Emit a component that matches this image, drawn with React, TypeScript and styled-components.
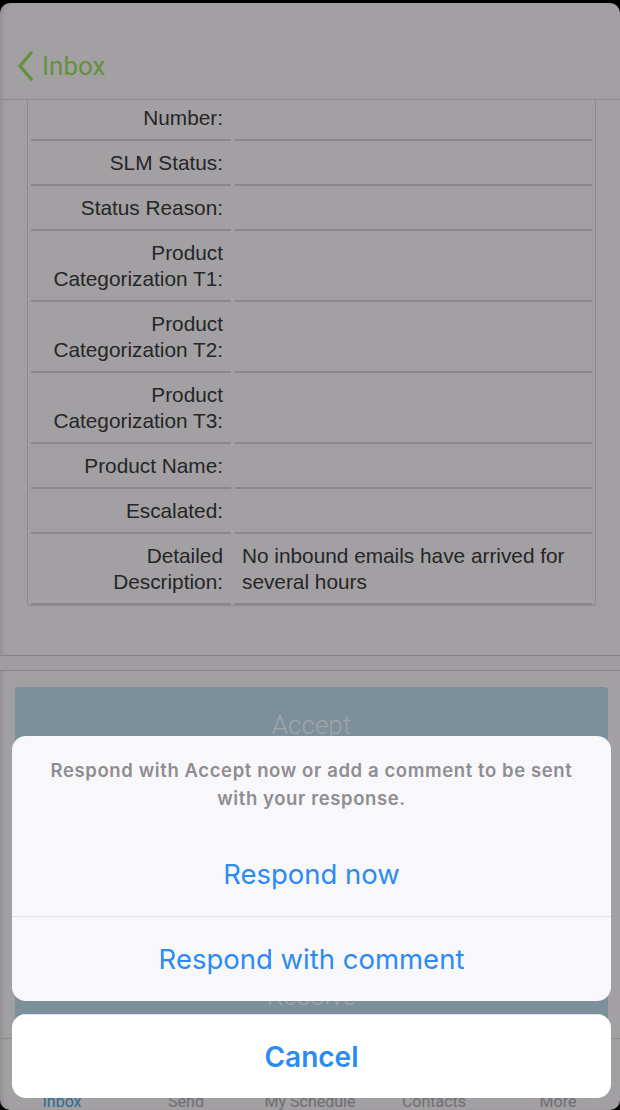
import React from 'react';
import styled, { createGlobalStyle } from 'styled-components';

const GlobalStyle = createGlobalStyle`
  html, body {
    margin: 0;
    padding: 0;
    background: #000;
  }
  * {
    box-sizing: border-box;
  }
`;

const Screen = styled.div`
  position: relative;
  width: 620px;
  height: 1110px;
  padding-top: 3px;
  background: #000;
  overflow: hidden;
`;

const Card = styled.div`
  display: flex;
  flex-direction: column;
  height: 1107px;
  background: #a2a0a3;
  border-radius: 10px;
  overflow: hidden;
  box-shadow: inset 5px 0 5px -3px rgba(0, 0, 0, 0.12);
`;

const NavBar = styled.div`
  display: flex;
  align-items: flex-end;
  height: 97px;
  padding: 0 0 18px 17px;
  border-bottom: 1px solid #8c8a8d;
  flex-shrink: 0;
`;

const BackButton = styled.div`
  display: flex;
  align-items: center;
  gap: 9px;
  color: #64913c;
  font-family: Roboto, 'Liberation Sans', sans-serif;
  font-size: 26px;
  line-height: 30px;
`;

const ScrollArea = styled.div`
  height: 555px;
  overflow: hidden;
  flex-shrink: 0;
`;

const DetailTable = styled.div`
  margin: -4px 0 0 27px;
  width: 569px;
  padding: 0 3px;
  border: 1px solid #8d8b8e;
  border-top: none;
  border-radius: 0 0 4px 4px;
`;

const Row = styled.div`
  display: grid;
  grid-template-columns: 200px 1fr;
  column-gap: 4px;
`;

const Cell = styled.div<{ $label?: boolean }>`
  padding: 8.5px ${({ $label }) => ($label ? '8px 8.5px 0' : '0 8.5px 7px')};
  border-bottom: 2px solid #8a888b;
  text-align: ${({ $label }) => ($label ? 'right' : 'left')};
  font-family: 'Liberation Sans', Arial, sans-serif;
  font-size: 20.8px;
  line-height: 26px;
  color: #262527;
`;

const Strip = styled.div`
  height: 16px;
  border-top: 1px solid #858386;
  border-bottom: 1px solid #8a888b;
  background: #9f9da0;
  flex-shrink: 0;
`;

const ActionPanel = styled.div`
  display: flex;
  flex-direction: column;
  justify-content: space-between;
  flex: 1;
  padding: 16px 12px 4px 15px;
`;

const PanelButton = styled.div`
  display: flex;
  align-items: center;
  justify-content: center;
  height: 76px;
  background: #7b909b;
  border-radius: 4px;
  color: #a1a4a7;
  font-family: Roboto, 'Liberation Sans', sans-serif;
  font-weight: 300;
  font-size: 26px;
`;

const TabBar = styled.div`
  display: grid;
  grid-template-columns: repeat(5, 1fr);
  height: 72px;
  padding-top: 53px;
  border-top: 1px solid #8c8a8d;
  flex-shrink: 0;
`;

const TabLabel = styled.div<{ $active?: boolean }>`
  text-align: center;
  font-family: Roboto, 'Liberation Sans', sans-serif;
  font-size: 16px;
  line-height: 20px;
  color: ${({ $active }) => ($active ? '#2a6d8c' : '#6f6d70')};
`;

const Sheet = styled.div`
  position: absolute;
  left: 12px;
  right: 9px;
  bottom: 12px;
  display: flex;
  flex-direction: column;
  gap: 13px;
`;

const SheetGroup = styled.div`
  background: #f8f7fa;
  border-radius: 14px;
  overflow: hidden;
`;

const SheetMessage = styled.div`
  padding: 20px 26px 19px;
  text-align: center;
  font-family: Inter, 'Liberation Sans', sans-serif;
  font-weight: 600;
  font-size: 18.5px;
  letter-spacing: 0.6px;
  line-height: 28px;
  color: #8e8d92;
`;

const SheetAction = styled.div<{ $bold?: boolean }>`
  display: flex;
  align-items: center;
  justify-content: center;
  height: ${({ $bold }) => ($bold ? 84 : 85)}px;
  border-top: 1px solid #e1e0e4;
  background: ${({ $bold }) => ($bold ? '#ffffff' : 'transparent')};
  font-family: Inter, 'Liberation Sans', sans-serif;
  font-weight: ${({ $bold }) => ($bold ? 600 : 400)};
  font-size: ${({ $bold }) => ($bold ? 28 : 27.5)}px;
  color: #2c8bf3;
`;

const FirstAction = styled(SheetAction)`
  border-top-color: transparent;
`;

type Field = { label: string[]; value?: string[] };

const fields: Field[] = [
  { label: ['Number:'] },
  { label: ['SLM Status:'] },
  { label: ['Status Reason:'] },
  { label: ['Product', 'Categorization T1:'] },
  { label: ['Product', 'Categorization T2:'] },
  { label: ['Product', 'Categorization T3:'] },
  { label: ['Product Name:'] },
  { label: ['Escalated:'] },
  {
    label: ['Detailed', 'Description:'],
    value: ['No inbound emails have arrived for', 'several hours'],
  },
];

const tabs = ['Inbox', 'Send', 'My Schedule', 'Contacts', 'More'];

const Lines = ({ lines }: { lines: string[] }) => (
  <>
    {lines.map((l, i) => (
      <div key={i}>{l}</div>
    ))}
  </>
);

export default function App(): React.ReactElement {
  return (
    <>
      <GlobalStyle />
      <Screen>
        <Card>
          <NavBar>
            <BackButton>
              <svg width="16" height="30" viewBox="0 0 16 30">
                <path
                  d="M14 2 L3 15 L14 28"
                  fill="none"
                  stroke="#64913c"
                  strokeWidth="3.4"
                  strokeLinecap="round"
                  strokeLinejoin="round"
                />
              </svg>
              Inbox
            </BackButton>
          </NavBar>

          <ScrollArea>
            <DetailTable>
              {fields.map((f, i) => (
                <Row key={i}>
                  <Cell $label>
                    <Lines lines={f.label} />
                  </Cell>
                  <Cell>
                    <Lines lines={f.value ?? []} />
                  </Cell>
                </Row>
              ))}
            </DetailTable>
          </ScrollArea>

          <Strip />

          <ActionPanel>
            <PanelButton>Accept</PanelButton>
            <PanelButton>Resolve</PanelButton>
          </ActionPanel>

          <TabBar>
            {tabs.map((t, i) => (
              <TabLabel key={t} $active={i === 0}>
                {t}
              </TabLabel>
            ))}
          </TabBar>
        </Card>

        <Sheet>
          <SheetGroup>
            <SheetMessage>
              Respond with Accept now or add a comment to be sent with your response.
            </SheetMessage>
            <FirstAction>Respond now</FirstAction>
            <SheetAction>Respond with comment</SheetAction>
          </SheetGroup>
          <SheetGroup>
            <SheetAction $bold>Cancel</SheetAction>
          </SheetGroup>
        </Sheet>
      </Screen>
    </>
  );
}
